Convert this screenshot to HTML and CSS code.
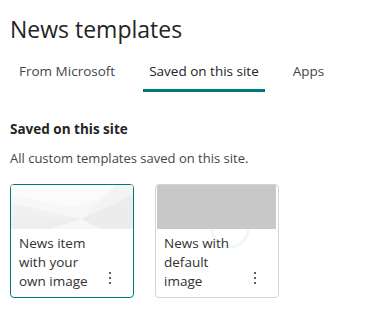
FILE: index.html
```html
<!DOCTYPE html>
<html lang="en">
<head>
  <meta charset="UTF-8">
  <meta name="viewport" content="width=device-width, initial-scale=1.0">
  <title>News templates</title>
  <link rel="stylesheet" href="styles.css">
</head>
<body>
  <h1 class="title">News templates</h1>
  <nav class="tabs">
    <a href="#" class="tab">From Microsoft</a>
    <a href="#" class="tab active">Saved on this site</a>
    <a href="#" class="tab">Apps</a>
  </nav>
  <section class="saved">
    <h2>Saved on this site</h2>
    <p class="desc">All custom templates saved on this site.</p>
    <div class="cards">
      <div class="card selected">
        <div class="thumb thumb-own">
          <svg width="122" height="44" viewBox="0 0 122 44">
            <rect width="122" height="44" fill="#f7f7f7"/>
            <polygon points="0,0 122,0 122,6 60,22 0,10" fill="#fbfbfb"/>
            <polygon points="0,18 70,34 0,44" fill="#f1f1f1"/>
            <polygon points="70,34 122,10 122,44 90,44" fill="#ececec"/>
            <polygon points="70,34 105,0 122,0 122,10" fill="#f3f3f3"/>
            <polygon points="0,30 70,34 40,44 0,44" fill="#eeeeee"/>
          </svg>
        </div>
        <div class="card-body">
          <span class="card-name">News item with your own image</span>
          <button class="more" aria-label="More">
            <svg width="4" height="14" viewBox="0 0 4 14"><rect x="1" y="1" width="2" height="2" fill="#605e5c"/><rect x="1" y="6" width="2" height="2" fill="#605e5c"/><rect x="1" y="11" width="2" height="2" fill="#605e5c"/></svg>
          </button>
        </div>
      </div>
      <div class="card">
        <div class="thumb thumb-default"></div>
        <div class="card-body">
          <svg class="watermark" width="40" height="30" viewBox="0 0 40 30"><path d="M2 0 A18 18 0 0 0 38 0" fill="none" stroke="#eef7f9" stroke-width="3"/></svg>
          <span class="card-name">News with default image</span>
          <button class="more" aria-label="More">
            <svg width="4" height="14" viewBox="0 0 4 14"><rect x="1" y="1" width="2" height="2" fill="#605e5c"/><rect x="1" y="6" width="2" height="2" fill="#605e5c"/><rect x="1" y="11" width="2" height="2" fill="#605e5c"/></svg>
          </button>
        </div>
      </div>
    </div>
  </section>
</body>
</html>
```

FILE: styles.css
```css
*{margin:0;padding:0;box-sizing:border-box}
body{font-family:'Open Sans','Noto Sans',sans-serif;background:#fff;color:#323130;padding:0 10px;width:366px}
.title{font-size:23px;font-weight:400;line-height:32px;padding-top:13px;color:#252423}
.tabs{display:flex;gap:22px;margin-top:16px;padding-left:3px}
.tab{display:block;padding:0 6px;font-size:13.5px;line-height:20px;height:31px;color:#484644;text-decoration:none;border-bottom:3px solid transparent}
.tab.active{color:#252423;border-bottom-color:#03787c}
.saved{margin-top:27px}
.saved h2{font-size:13.5px;font-weight:700;line-height:20px;color:#252423}
.desc{font-size:13px;line-height:20px;color:#484644;margin-top:9px}
.cards{display:flex;gap:21px;margin-top:16px}
.card{width:124px;height:114px;border:1px solid #d4d4d4;border-radius:4px;overflow:hidden;display:flex;flex-direction:column;background:#fff}
.card.selected{border-color:#03787c}
.thumb{height:44px;flex:none}
.thumb svg{display:block}
.thumb-default{background:#c8c8c8;margin:0 2px 0 1px}
.card-body{position:relative;flex:1;display:flex;align-items:flex-end;justify-content:space-between;padding:5px 21px 10px 8px}
.card-name{position:relative;align-self:flex-start;width:80px;font-size:13.5px;line-height:19px;color:#323130}
.more{background:none;border:none;display:flex;padding:0;margin-bottom:6px}
.more svg{display:block}
.watermark{position:absolute;left:54px;top:0}
```
